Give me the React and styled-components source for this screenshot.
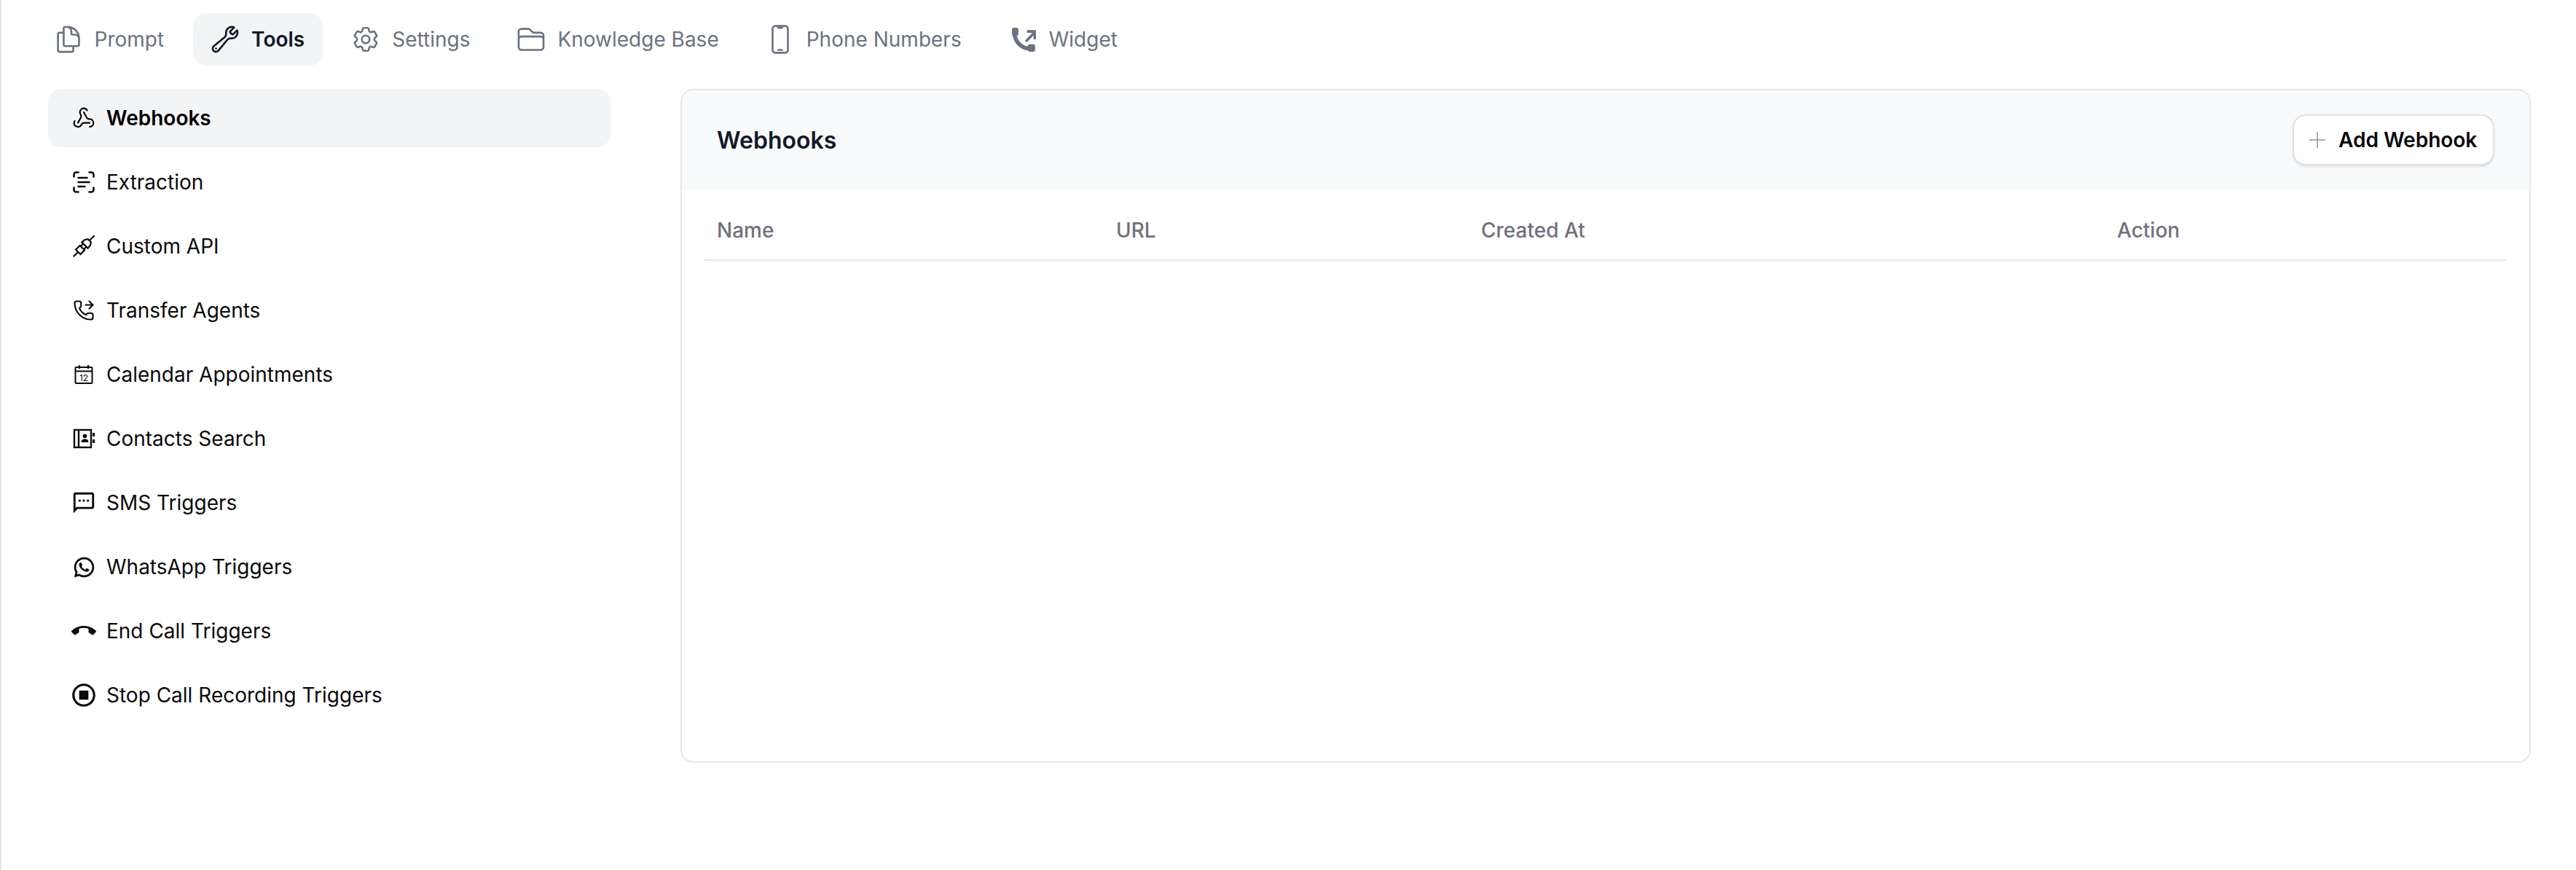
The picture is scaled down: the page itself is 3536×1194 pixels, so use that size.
import React from "react";
import styled, { createGlobalStyle } from "styled-components";
import { Webhook, ScanText, PhoneForwarded, Plus } from "lucide-react";
import { MdOutlineSms, MdCallEnd, MdOutlineStopCircle } from "react-icons/md";
import { RiWhatsappLine } from "react-icons/ri";
import {
  HiOutlineDocumentDuplicate,
  HiOutlineWrench,
  HiOutlineCog6Tooth,
  HiOutlineFolder,
  HiOutlineDevicePhoneMobile,
} from "react-icons/hi2";

const GlobalStyle = createGlobalStyle`
  html, body {
    margin: 0;
    padding: 0;
    background: #fff;
  }
  body {
    font-family: Inter, "Liberation Sans", sans-serif;
  }
`;

const WidgetIcon = () => (
  <svg viewBox="0 0 36 36" fill="none" stroke="currentColor">
    <rect x="4" y="2" width="8.5" height="11" rx="3" fill="currentColor" stroke="none" />
    <rect x="25" y="24" width="10" height="10" rx="3" fill="currentColor" stroke="none" />
    <path d="M7.5 10C8 20 16 29.5 28 30" strokeWidth="5.5" />
    <path d="M22.5 20.5L33 9.5M24 7h10.5v10.5" strokeWidth="3.6" />
  </svg>
);

const PlugIcon = () => (
  <svg width="30" height="30" viewBox="0 0 30 30" fill="none" stroke="currentColor" strokeWidth="2.2">
    <g transform="rotate(-45 15 15)">
      <path d="M-5 15h9M27 15h9M12 12h5M12 18h5M17 8v14" />
      <path d="M4 10.5h8v9H4zM17 9.5h5l4 2.5v6l-4 2.5h-5" />
    </g>
  </svg>
);

const CalendarIcon = () => (
  <svg width="30" height="30" viewBox="0 0 30 30" fill="none" stroke="currentColor" strokeWidth="2">
    <rect x="3.5" y="5" width="23" height="22" rx="1" />
    <path d="M3.5 10.5h23M9 2v5M21 2v5" />
    <text x="15" y="24" textAnchor="middle" fontSize="12" fontFamily="Inter, sans-serif" fill="currentColor" stroke="none">
      12
    </text>
  </svg>
);

const ContactsIcon = () => (
  <svg width="32" height="30" viewBox="0 0 32 30" fill="none" stroke="currentColor" strokeWidth="2.4">
    <rect x="3" y="3" width="23" height="24" />
    <path d="M9 3v24" />
    <circle cx="17.5" cy="11.5" r="2.8" fill="currentColor" stroke="none" />
    <path d="M12.5 20c0-3 2.2-4.4 5-4.4s5 1.4 5 4.4z" fill="currentColor" stroke="none" />
    <path d="M29.5 7v5M29.5 16v5" strokeWidth="3" />
  </svg>
);

const Page = styled.div`
  box-sizing: border-box;
  min-height: 1194px;
  border-left: 2px solid #e5e7eb;
  padding: 18px 62px 0 64px;
`;

const TabBar = styled.nav`
  display: flex;
  gap: 15px;
  margin-left: -17px;
  margin-bottom: 32px;
`;

const Tab = styled.div`
  display: flex;
  align-items: center;
  gap: 18px;
  height: 72px;
  padding: 0 24.5px 0 26.5px;
  border-radius: 18px;
  font-size: 28px;
  font-weight: ${(p) => (p.$active ? 600 : 400)};
  color: ${(p) => (p.$active ? "#111827" : "#6b7280")};
  background: ${(p) => (p.$active ? "#f3f4f6" : "transparent")};
`;

const TabIcon = styled.span`
  display: flex;
  width: 36px;
  height: 36px;
  align-items: center;
  justify-content: center;
  svg {
    width: ${(p) => p.$size || 42}px;
    height: ${(p) => p.$size || 42}px;
    flex: none;
  }
`;

const Columns = styled.div`
  display: flex;
  align-items: flex-start;
  gap: 96px;
`;

const Sidebar = styled.aside`
  display: flex;
  flex-direction: column;
  gap: 8px;
  width: 772px;
  flex: none;
`;

const SideItem = styled.div`
  display: flex;
  align-items: center;
  gap: 14px;
  height: 80px;
  padding-left: 32px;
  border-radius: 18px;
  font-size: 28px;
  font-weight: ${(p) => (p.$active ? 600 : 400)};
  color: ${(p) => (p.$active ? "#000" : "#0a0a0a")};
  background: ${(p) => (p.$active ? "#f3f4f6" : "transparent")};
`;

const SideIcon = styled.span`
  display: flex;
  width: 34px;
  height: 34px;
  align-items: center;
  justify-content: center;
  svg {
    flex: none;
  }
`;

const Card = styled.section`
  box-sizing: border-box;
  flex: 1;
  height: 925px;
  border: 2px solid #e5e7eb;
  border-radius: 18px;
  overflow: hidden;
`;

const CardHeader = styled.header`
  display: flex;
  align-items: center;
  justify-content: space-between;
  height: 136px;
  padding: 0 48px;
  background: #f9fafb;
`;

const CardTitle = styled.h2`
  margin: 0;
  font-size: 32px;
  font-weight: 600;
  color: #111827;
`;

const AddButton = styled.button`
  display: flex;
  align-items: center;
  gap: 11px;
  box-sizing: border-box;
  width: 277px;
  height: 70px;
  padding: 0 0 0 14px;
  border: 2px solid #e0e1e4;
  border-radius: 18px;
  background: #fff;
  box-shadow: 0 2px 3px rgba(0, 0, 0, 0.1);
  font-family: inherit;
  font-size: 28px;
  font-weight: 600;
  color: #09090b;
  white-space: nowrap;
  svg {
    color: #8f8f98;
  }
`;

const TableWrap = styled.div`
  padding: 0 32px 0 30px;
`;

const HeadRow = styled.div`
  display: grid;
  grid-template-columns: 548px 501px 873px 550px;
  height: 98px;
  box-sizing: border-box;
  padding-top: 16px;
  border-bottom: 2px solid #e5e7eb;
`;

const HeadCell = styled.div`
  display: flex;
  align-items: center;
  padding-left: 18px;
  font-size: 28px;
  font-weight: 500;
  color: #71717a;
`;

const tabs = [
  { label: "Prompt", icon: <HiOutlineDocumentDuplicate /> },
  { label: "Tools", icon: <HiOutlineWrench />, active: true },
  { label: "Settings", icon: <HiOutlineCog6Tooth /> },
  { label: "Knowledge Base", icon: <HiOutlineFolder /> },
  { label: "Phone Numbers", icon: <HiOutlineDevicePhoneMobile /> },
  { label: "Widget", icon: <WidgetIcon />, size: 37 },
];

const sideItems = [
  { label: "Webhooks", icon: <Webhook size={32} strokeWidth={1.6} />, active: true },
  { label: "Extraction", icon: <ScanText size={36} strokeWidth={1.7} /> },
  { label: "Custom API", icon: <PlugIcon /> },
  { label: "Transfer Agents", icon: <PhoneForwarded size={30} strokeWidth={1.7} /> },
  { label: "Calendar Appointments", icon: <CalendarIcon /> },
  { label: "Contacts Search", icon: <ContactsIcon /> },
  { label: "SMS Triggers", icon: <MdOutlineSms size={34} /> },
  { label: "WhatsApp Triggers", icon: <RiWhatsappLine size={33} /> },
  { label: "End Call Triggers", icon: <MdCallEnd size={34} /> },
  { label: "Stop Call Recording Triggers", icon: <MdOutlineStopCircle size={38} /> },
];

const columns = ["Name", "URL", "Created At", "Action"];

export default function App() {
  return (
    <Page>
      <GlobalStyle />
      <TabBar>
        {tabs.map((t) => (
          <Tab key={t.label} $active={t.active}>
            <TabIcon $size={t.size}>{t.icon}</TabIcon>
            {t.label}
          </Tab>
        ))}
      </TabBar>
      <Columns>
        <Sidebar>
          {sideItems.map((s) => (
            <SideItem key={s.label} $active={s.active}>
              <SideIcon>{s.icon}</SideIcon>
              {s.label}
            </SideItem>
          ))}
        </Sidebar>
        <Card>
          <CardHeader>
            <CardTitle>Webhooks</CardTitle>
            <AddButton>
              <Plus size={36} strokeWidth={1} />
              Add Webhook
            </AddButton>
          </CardHeader>
          <TableWrap>
            <HeadRow>
              {columns.map((c) => (
                <HeadCell key={c}>{c}</HeadCell>
              ))}
            </HeadRow>
          </TableWrap>
        </Card>
      </Columns>
    </Page>
  );
}
